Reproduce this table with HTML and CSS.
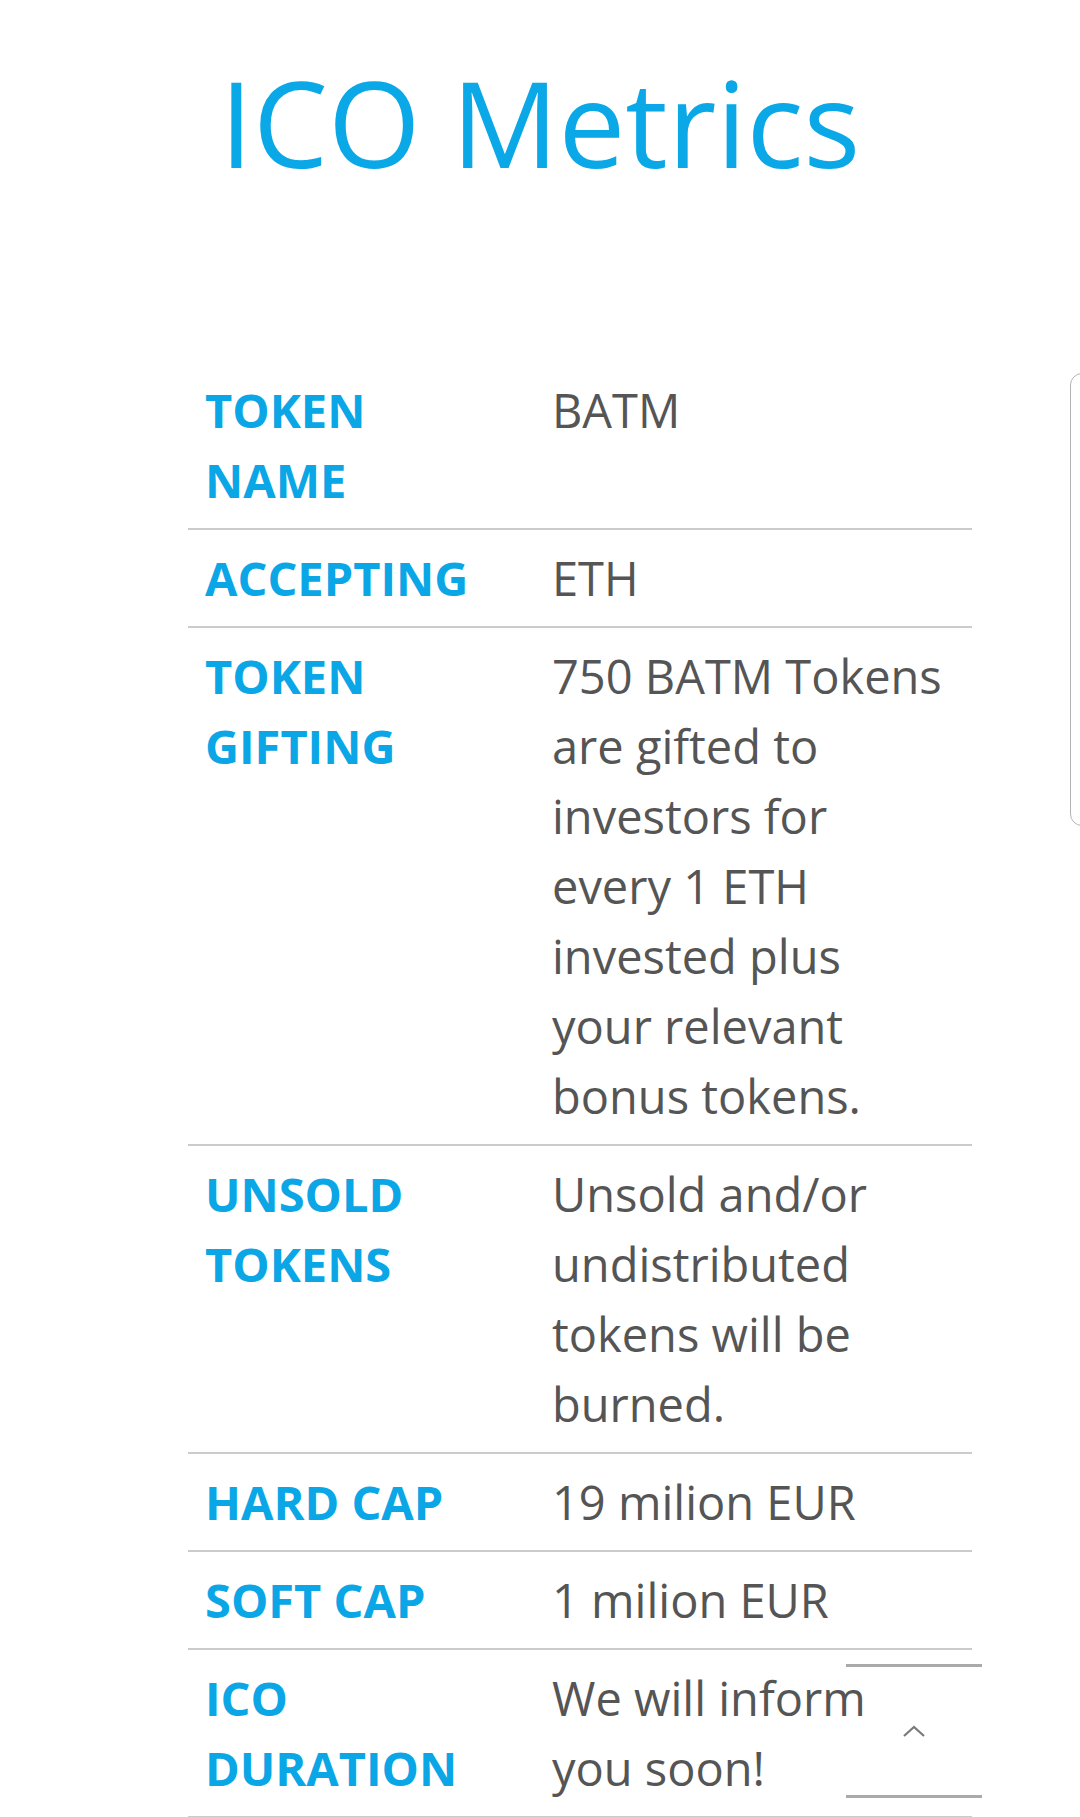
FILE: index.html
```html
<!DOCTYPE html>
<html lang="en">
<head>
<meta charset="utf-8">
<title>ICO Metrics</title>
<link rel="stylesheet" href="styles.css">
</head>
<body>
<main class="page">
  <h1 class="title">ICO Metrics</h1>
  <div class="metrics">
    <div class="row"><div class="label">TOKEN NAME</div><div class="value">BATM</div></div>
    <div class="row"><div class="label">ACCEPTING</div><div class="value">ETH</div></div>
    <div class="row"><div class="label">TOKEN GIFTING</div><div class="value">750 BATM Tokens are gifted to investors for every 1 ETH invested plus your relevant bonus tokens.</div></div>
    <div class="row"><div class="label">UNSOLD TOKENS</div><div class="value">Unsold and/or undistributed tokens will be burned.</div></div>
    <div class="row"><div class="label">HARD CAP</div><div class="value">19 milion EUR</div></div>
    <div class="row"><div class="label">SOFT CAP</div><div class="value">1 milion EUR</div></div>
    <div class="row"><div class="label">ICO DURATION</div><div class="value">We will inform you soon!</div></div>
  </div>
</main>
<div class="edge-handle"></div>
<button class="to-top" aria-label="Back to top">
  <svg width="24" height="14" viewBox="0 0 24 14"><path d="M2 12 L12 3 L22 12" fill="none" stroke="#7a7a7a" stroke-width="2.2"/></svg>
</button>
</body>
</html>
```
FILE: styles.css
```css
html, body {
  margin: 0;
  padding: 0;
  background: #ffffff;
}
body {
  font-family: "Open Sans", "Liberation Sans", sans-serif;
  height: 1817px;
  overflow: hidden;
}
.page {
  display: flex;
  flex-direction: column;
}
.title {
  margin: 41px 0 0;
  font-size: 119px;
  font-weight: 400;
  line-height: 162px;
  color: #0ba8e8;
  text-align: center;
}
.metrics {
  margin: 159px 0 0 188px;
  width: 784px;
  display: flex;
  flex-direction: column;
}
.row {
  display: grid;
  grid-template-columns: 347px 1fr;
  border-bottom: 2px solid #cbcbcb;
}
.label, .value {
  padding: 13px 17px;
  line-height: 70px;
}
.label {
  padding-right: 50px;
  font-size: 47px;
  font-weight: 700;
  color: #0aa6e6;
}
.value {
  padding-right: 25px;
  font-size: 47px;
  font-weight: 400;
  color: #555555;
}
.edge-handle {
  position: absolute;
  left: 1070px;
  top: 373px;
  width: 40px;
  height: 451px;
  border: 1.5px solid #b4b4b4;
  border-radius: 12px;
}
.to-top {
  position: absolute;
  left: 846px;
  top: 1664px;
  width: 136px;
  height: 134px;
  padding: 0;
  background: transparent;
  border: none;
  border-top: 3px solid #aaaaaa;
  border-bottom: 3px solid #aaaaaa;
  display: flex;
  align-items: center;
  justify-content: center;
}
.to-top svg {
  display: block;
}
```
